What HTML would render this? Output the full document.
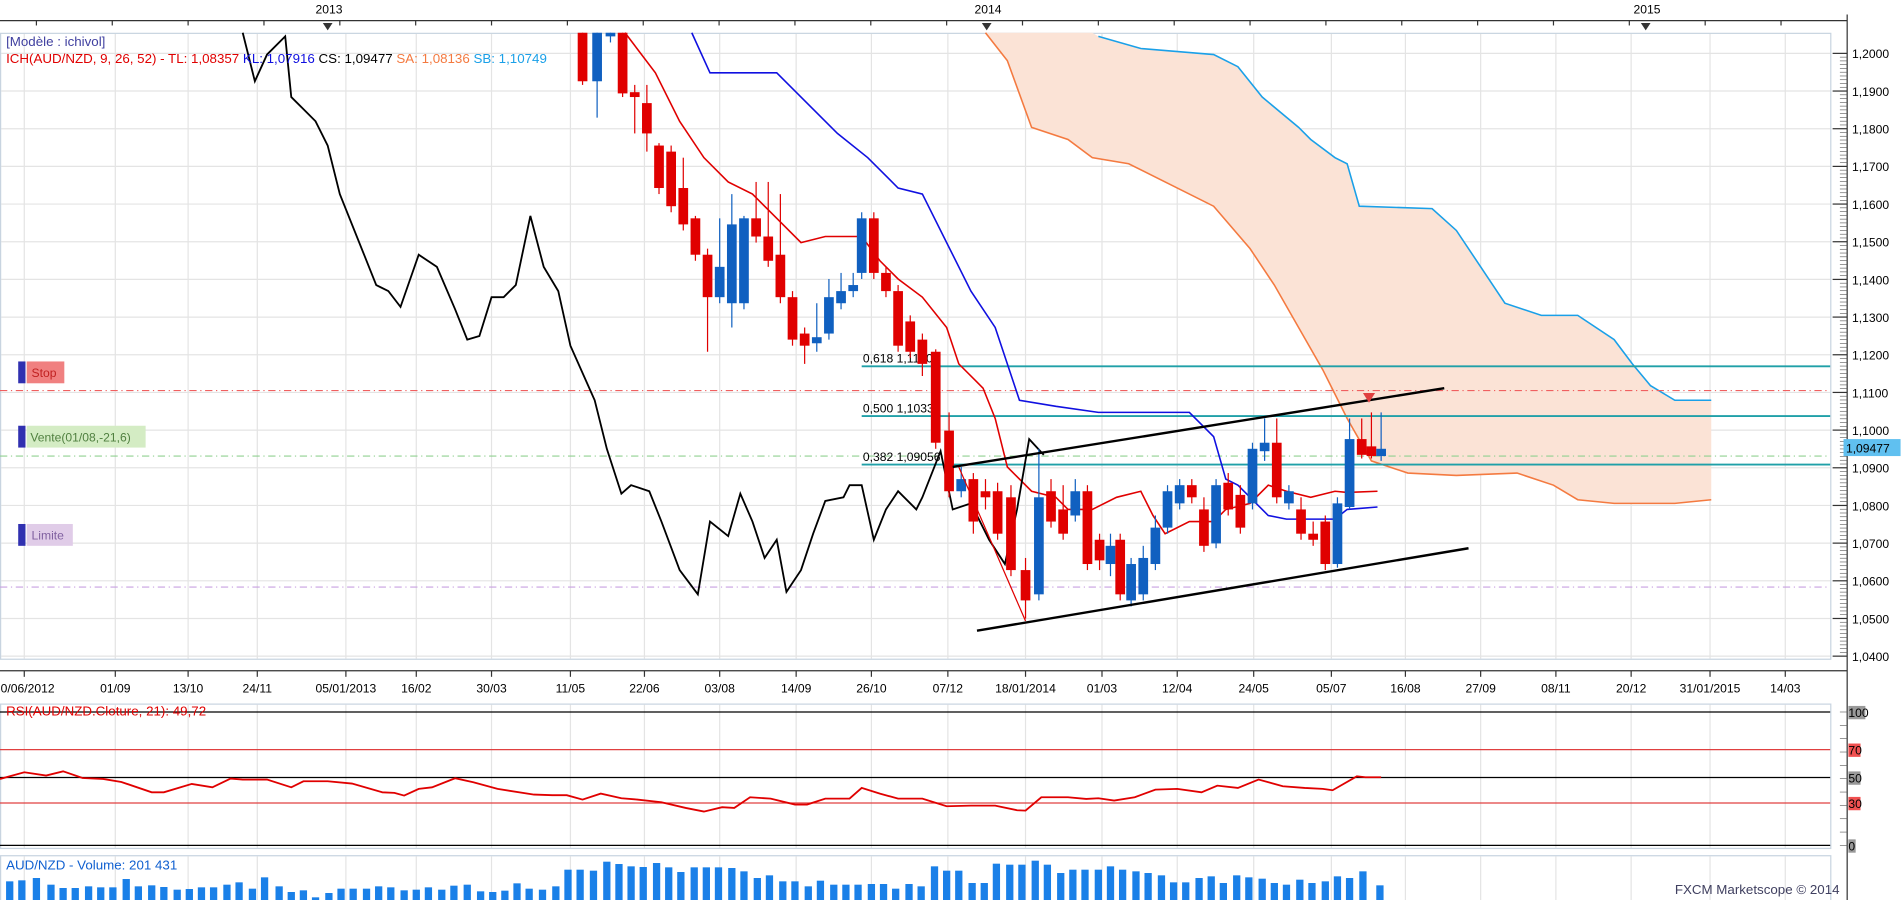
<!DOCTYPE html>
<html><head><meta charset="utf-8">
<style>
html,body{margin:0;padding:0;background:#fff;overflow:hidden}
svg{display:block}
text{font-family:"Liberation Sans",Arial,sans-serif;font-size:10px}
</style></head>
<body>
<svg id="s" width="1903" height="900" viewBox="0 0 1568 742" preserveAspectRatio="none" xmlns="http://www.w3.org/2000/svg">
<rect width="1568" height="742" fill="#fff"/>
<line x1="0" y1="17" x2="1522" y2="17" stroke="#333"/>
<line x1="1522" y1="12" x2="1522" y2="742" stroke="#333"/>
<text x="260" y="11">2013</text><text x="803" y="11">2014</text><text x="1346" y="11">2015</text>
<polygon points="266,19 274,19 270,25" fill="#333"/>
<polygon points="809,19 817,19 813,25" fill="#333"/>
<polygon points="1352,19 1360,19 1356,25" fill="#333"/>
<g id="grid"></g>
<rect x="0.5" y="27.5" width="1508" height="516" fill="none" stroke="#c8d4e0"/>
<rect x="0.5" y="580.5" width="1508" height="119" fill="none" stroke="#c8d4e0"/>
<rect x="0.5" y="705.5" width="1508" height="40" fill="none" stroke="#c8d4e0"/>
<line x1="0" y1="553" x2="1522" y2="553" stroke="#333"/>
<polygon fill="#fbe3d6" points="812,27 830,50 850,105 880,115 900,130 930,135 960,150 1000,170 1030,205 1050,235 1070,270 1090,305 1110,345 1130,380 1160,390 1200,392 1250,390 1280,400 1300,412 1330,415 1380,415 1410,412 1410,330 1380,330 1360,318 1345,300 1330,280 1300,260 1270,260 1240,250 1220,220 1200,190 1180,172 1120,170 1110,135 1100,130 1080,115 1070,105 1040,80 1020,55 1000,45 940,40 905,30 900,27"/>
<polyline fill="none" stroke="#f47a40" stroke-width="1.3" points="812,27 830,50 850,105 880,115 900,130 930,135 960,150 1000,170 1030,205 1050,235 1070,270 1090,305 1110,345 1130,380 1160,390 1200,392 1250,390 1280,400 1300,412 1330,415 1380,415 1410,412"/>
<polyline fill="none" stroke="#1aa0e8" stroke-width="1.3" points="905,30 940,40 1000,45 1020,55 1040,80 1070,105 1080,115 1100,130 1110,135 1120,170 1180,172 1200,190 1220,220 1240,250 1270,260 1300,260 1330,280 1345,300 1360,318 1380,330 1410,330"/>
<line x1="0" y1="322" x2="1508" y2="322" stroke="#f06060" stroke-dasharray="6,3,1,3"/>
<line x1="0" y1="376" x2="1508" y2="376" stroke="#90d090" stroke-dasharray="6,3,1,3"/>
<line x1="0" y1="484" x2="1508" y2="484" stroke="#c8a0e0" stroke-dasharray="6,3,1,3"/>
<line x1="710" y1="302" x2="1508" y2="302" stroke="#20a0a8" stroke-width="1.5"/>
<line x1="710" y1="343" x2="1508" y2="343" stroke="#20a0a8" stroke-width="1.5"/>
<line x1="710" y1="383" x2="1508" y2="383" stroke="#20a0a8" stroke-width="1.5"/>
<text x="711" y="299">0,618  1,11609</text>
<text x="711" y="340">0,500  1,1033</text>
<text x="711" y="380">0,382  1,09056</text>
<polyline fill="none" stroke="#1010e0" stroke-width="1.3" points="570,27 585,60 640,60 660,80 690,110 715,130 740,155 760,160 780,200 800,240 820,270 840,330 870,335 905,340 980,340 1000,360 1010,395 1020,400 1030,410 1045,425 1060,428 1100,428 1110,420 1135,418"/>
<polyline fill="none" stroke="#e00000" stroke-width="1.3" points="515,27 540,60 560,100 580,130 600,150 620,160 640,180 660,200 680,195 710,195 725,215 740,230 760,245 780,270 790,300 810,320 820,345 830,385 850,405 870,410 880,420 900,420 920,410 940,405 950,425 960,440 980,430 1000,430 1010,420 1030,415 1045,400 1060,405 1080,410 1100,405 1110,406 1135,405"/>
<polyline fill="none" stroke="#000" stroke-width="1.5" points="200,27 210,67 220,45 235,30 240,80 250,90 260,100 270,120 280,160 300,210 310,235 320,240 330,253 345,210 360,220 375,255 385,280 395,277 405,245 415,245 425,235 437,178 448,220 460,240 470,285 490,330 500,370 512,407 520,400 535,405 545,430 560,470 575,490 585,430 600,442 610,407 620,430 630,460 640,445 648,488 660,470 670,440 680,413 695,410 700,400 710,400 720,445 730,420 740,405 755,420 760,410 775,372 785,420 800,415 815,445 828,465 838,420 848,362 860,375"/>
<g id="candles"></g>
<line x1="790" y1="385" x2="845" y2="512" stroke="#e00000"/>
<line x1="805" y1="520" x2="1210" y2="452" stroke="#000" stroke-width="2"/>
<line x1="785" y1="385" x2="1190" y2="320" stroke="#000" stroke-width="2"/>
<polygon points="1123,324 1133,324 1128,332" fill="#e04040"/>
<text x="5" y="38" fill="#4040a0" style="font-size:11px">[Modèle : ichivol]</text>
<text x="5" y="52" style="font-size:11px"><tspan fill="#e00000">ICH(AUD/NZD, 9, 26, 52) -  TL: 1,08357  </tspan><tspan fill="#1010e0">KL: 1,07916  </tspan><tspan fill="#000">CS: 1,09477  </tspan><tspan fill="#f47a40">SA: 1,08136  </tspan><tspan fill="#1aa0e8">SB: 1,10749</tspan></text>
<rect x="15" y="298" width="6" height="18" fill="#3030b0"/><rect x="22" y="298" width="31" height="18" fill="#f08080"/><text x="26" y="311" fill="#c02020">Stop</text>
<rect x="15" y="351" width="6" height="18" fill="#3030b0"/><rect x="22" y="351" width="98" height="18" fill="#d4ecc4"/><text x="25" y="364" fill="#508040">Vente(01/08,-21,6)</text>
<rect x="15" y="432" width="6" height="18" fill="#3030b0"/><rect x="22" y="432" width="38" height="18" fill="#e0cce8"/><text x="26" y="445" fill="#8060a0">Limite</text>
<g id="axis"></g>
<rect x="1519" y="362" width="47" height="14" fill="#60c0f0"/><text x="1521" y="373">1,09477</text>
<line x1="0" y1="587" x2="1508" y2="587" stroke="#000"/>
<line x1="0" y1="618" x2="1508" y2="618" stroke="#e04040"/>
<line x1="0" y1="641" x2="1508" y2="641" stroke="#000"/>
<line x1="0" y1="662" x2="1508" y2="662" stroke="#e04040"/>
<line x1="0" y1="697" x2="1508" y2="697" stroke="#000"/>
<text x="5" y="590" fill="#e00000" style="font-size:11px">RSI(AUD/NZD.Cloture, 21): 49,72</text>
<rect x="1523" y="582" width="14" height="11" fill="#999"/><text x="1523" y="591">100</text>
<rect x="1523" y="613" width="10" height="11" fill="#f05050"/><text x="1523" y="622">70</text>
<rect x="1523" y="636" width="10" height="11" fill="#999"/><text x="1523" y="645">50</text>
<rect x="1523" y="657" width="10" height="11" fill="#f05050"/><text x="1523" y="666">30</text>
<rect x="1523" y="692" width="6" height="11" fill="#999"/><text x="1523" y="701">0</text>
<polyline id="rsi" fill="none" stroke="#e00000" stroke-width="1.5"/>
<text x="5" y="717" fill="#1060d0" style="font-size:11px">AUD/NZD - Volume: 201 431</text>
<text x="1380" y="737" fill="#404060" style="font-size:11px">FXCM Marketscope © 2014</text>
<g id="vol"></g>
</svg>
<script>
var NS="http://www.w3.org/2000/svg";
function el(p,t,a){var e=document.createElementNS(NS,t);for(var k in a)e.setAttribute(k,a[k]);p.appendChild(e);return e;}
var g=document.getElementById('grid'),ax=document.getElementById('axis');
var dx=[20,95,155,212,285,343,405,470,531,593,656,718,781,845,908,970,1033,1097,1158,1220,1282,1344,1409,1471];
var dl=["30/06/2012","01/09","13/10","24/11","05/01/2013","16/02","30/03","11/05","22/06","03/08","14/09","26/10","07/12","18/01/2014","01/03","12/04","24/05","05/07","16/08","27/09","08/11","20/12","31/01/2015","14/03"];
dx.forEach(function(x,i){
 el(g,'line',{x1:x,y1:28,x2:x,y2:543,stroke:'#e4e4e4'});
 el(g,'line',{x1:x,y1:581,x2:x,y2:699,stroke:'#e4e4e4'});
 el(g,'line',{x1:x,y1:706,x2:x,y2:742,stroke:'#e4e4e4'});
 el(g,'line',{x1:x,y1:553,x2:x,y2:558,stroke:'#333'});
 var t=el(ax,'text',{x:x,y:571,'text-anchor':'middle'});t.textContent=dl[i];
});
for(var x=30;x<1520;x+=62.5){el(ax,'line',{x1:x,y1:17,x2:x,y2:21,stroke:'#333'});}
for(var i=0;i<=16;i++){var p=1.2-i*0.01,y=44+i*31.06;
 el(g,'line',{x1:1,y1:y,x2:1508,y2:y,stroke:'#e4e4e4'});
 el(ax,'line',{x1:1510,y1:y,x2:1522,y2:y,stroke:'#333'});
 for(var j=1;j<10&&i<16;j++)el(ax,'line',{x1:1516,y1:y+j*3.106,x2:1522,y2:y+j*3.106,stroke:'#555','stroke-width':0.5});
 var t=el(ax,'text',{x:1526,y:y+4});t.textContent=p.toFixed(4).replace('.',',');}
var C=[[480,'r',27,67,27,70],[492,'b',27,67,27,97],[503,'b',27,30,27,35],[513,'r',27,77,27,80],[523,'r',76,80,70,110],[533,'r',85,110,70,125],[543,'r',120,155,118,160],[553,'r',125,170,120,175],[563,'r',155,185,130,190],[573,'r',180,210,178,215],[583,'r',210,245,205,290],[593,'b',220,245,180,250],[603,'b',185,250,160,270],[613,'b',180,250,178,255],[623,'r',180,195,150,200],[633,'r',195,215,150,220],[643,'r',210,245,160,250],[653,'r',245,280,240,285],[663,'r',275,285,270,300],[673,'b',278,283,250,290],[683,'b',245,275,230,280],[693,'b',240,250,225,255],[703,'b',235,240,225,245],[710,'b',180,225,175,230],[720,'r',180,225,175,230],[730,'r',225,240,220,245],[740,'r',240,285,235,290],[750,'r',265,290,260,295],[760,'r',280,300,275,310],[771,'r',290,365,288,370],[782,'r',355,405,340,410],[792,'b',395,405,385,410],[802,'r',395,430,390,440],[812,'r',405,410,395,420],[822,'r',405,440,398,445],[833,'r',410,470,400,475],[845,'r',470,495,460,510],[856,'b',410,490,370,495],[866,'r',405,430,395,435],[876,'r',420,440,400,445],[886,'b',405,425,395,430],[896,'r',405,465,400,470],[906,'r',445,462,440,470],[915,'b',450,465,440,475],[923,'r',445,490,440,495],[932,'b',465,495,460,500],[942,'b',460,490,450,495],[952,'b',435,465,425,470],[962,'b',405,435,400,440],[972,'b',400,415,395,420],[982,'r',400,410,395,415],[992,'r',420,450,410,455],[1002,'b',400,448,395,452],[1012,'r',398,420,390,425],[1022,'r',408,435,400,440],[1032,'b',370,415,365,420],[1042,'b',365,372,345,380],[1052,'r',365,410,345,415],[1062,'b',405,415,400,420],[1072,'r',420,440,410,445],[1082,'r',440,445,430,450],[1092,'r',430,465,425,470],[1102,'b',415,465,410,468],[1112,'b',362,418,345,420],[1122,'r',362,375,345,378],[1130,'r',368,376,340,378],[1138,'b',370,376,340,380]];
var cg=document.getElementById('candles');
C.forEach(function(c){var col=c[1]=='r'?'#e00000':'#1060c0';
 el(cg,'line',{x1:c[0],y1:c[4],x2:c[0],y2:c[5],stroke:col});
 el(cg,'rect',{x:c[0]-4,y:c[2],width:8,height:Math.max(1,c[3]-c[2]),fill:col});});
var R=[[0,238],[20,218],[38,228],[52,215],[68,235],[85,238],[100,247],[125,278],[135,278],[158,253],[175,263],[190,237],[200,240],[220,240],[240,263],[250,245],[270,245],[290,252],[315,278],[325,280],[333,288],[345,268],[356,263],[375,236],[390,248],[410,268],[440,285],[455,287],[467,287],[480,300],[495,282],[512,296],[525,300],[545,308],[565,325],[580,336],[595,323],[605,325],[618,293],[635,297],[655,315],[665,315],[680,297],[700,297],[710,265],[725,282],[740,297],[760,297],[780,320],[800,318],[820,318],[838,332],[845,333],[858,293],[880,293],[895,298],[905,296],[918,303],[935,293],[952,270],[970,268],[990,278],[1003,258],[1020,265],[1037,240],[1057,260],[1075,265],[1090,268],[1098,272],[1118,230],[1125,233],[1138,233]];
document.getElementById('rsi').setAttribute('points',R.map(function(p){return p[0]+','+(576.8+p[1]/3.64).toFixed(1)}).join(' '));
var V=[[8,540],[18,537],[30,530],[42,550],[52,560],[62,560],[73,555],[83,558],[93,558],[104,533],[114,555],[125,552],[135,557],[146,565],[156,563],[166,558],[176,558],[187,550],[197,543],[208,562],[218,528],[230,555],[240,572],[250,567],[260,588],[271,575],[281,562],[291,562],[302,562],[312,555],[322,558],[333,567],[343,565],[353,558],[364,565],[374,553],[385,550],[396,570],[406,572],[416,568],[426,546],[436,562],[447,565],[458,555],[468,505],[478,505],[489,508],[500,481],[510,488],[520,495],[530,497],[541,485],[551,498],[561,512],[572,498],[582,498],[592,498],[603,500],[613,510],[624,530],[634,522],[645,540],[655,540],[666,555],[676,538],[687,550],[697,550],[707,550],[718,548],[728,548],[738,562],[749,548],[759,555],[770,495],[780,508],[790,508],[801,545],[811,545],[821,487],[832,490],[842,490],[853,478],[863,490],[874,515],[884,505],[894,505],[905,505],[915,495],[925,505],[936,510],[946,515],[957,522],[967,543],[977,543],[988,530],[998,525],[1008,545],[1019,522],[1029,528],[1040,532],[1050,545],[1060,550],[1071,535],[1081,545],[1092,540],[1102,525],[1112,530],[1123,510],[1137,552]];
var vg=document.getElementById('vol');
V.forEach(function(v){var h=(596-v[1])/3.64;el(vg,'rect',{x:v[0]-3,y:742-h,width:6,height:h,fill:'#1a80e8'});});
for(var i=0;i<=10;i++){el(ax,'line',{x1:1516,y1:587+i*11,x2:1522,y2:587+i*11,stroke:'#555','stroke-width':0.5});}
</script>
</body></html>
